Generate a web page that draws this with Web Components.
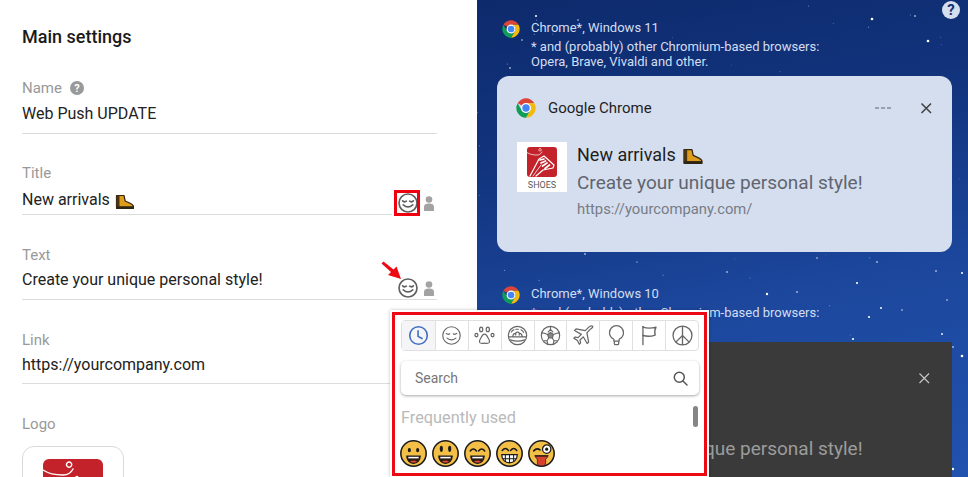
<!DOCTYPE html>
<html lang="en">
<head>
<meta charset="utf-8">
<title>Main settings</title>
<style>
  html, body { margin: 0; padding: 0; background: #fff; }
  body { font-family: Roboto, "Liberation Sans", sans-serif; overflow: hidden; }
</style>
</head>
<body>
<push-page>
  <settings-panel slot="left"></settings-panel>
  <preview-panel slot="right"></preview-panel>
  <emoji-popup slot="over"></emoji-popup>
</push-page>

<script>
const smileSvg = (size, color) => `<svg width="${size}" height="${size}" viewBox="0 0 24 24" fill="none" stroke="${color}" stroke-width="1.8" stroke-linecap="round"><circle cx="12" cy="12" r="9.8"/><path d="M6.200 9.600q2 1.900 4 .4M13.800 10q2 1.500 4-.4"/><path d="M6.800 14q5.200 4.600 10.400 0"/></svg>`

const tabIcons = [
  `<svg viewBox="0 0 24 24" fill="none" stroke="#3f6fc2" stroke-width="1.800" stroke-linecap="round" stroke-linejoin="round"><circle cx="12" cy="12" r="10"/><path d="M11.500 6.500V13l4.500 2.500"/></svg>`,
  `<svg viewBox="0 0 24 24" fill="none" stroke="#666" stroke-width="1.300" stroke-linecap="round"><circle cx="12" cy="12" r="10"/><path d="M6 9.600q2 1.900 4 .4M14 10q2 1.500 4-.4"/><path d="M7 15q5 4 10 0"/></svg>`,
  `<svg viewBox="0 0 24 24" fill="none" stroke="#666" stroke-width="1.400" stroke-linejoin="round"><ellipse cx="2.800" cy="11.500" rx="1.700" ry="2"/><ellipse cx="8.200" cy="5" rx="1.800" ry="2.600"/><ellipse cx="15.800" cy="5" rx="1.800" ry="2.600"/><ellipse cx="21.200" cy="11.500" rx="1.700" ry="2"/><path d="M12 10.500c-2 0-3 1.800-4 4-1 2-2.500 3.500-1.500 5.500 1 1.500 3.500.8 5.500.8s4.500.7 5.500-.8c1-2-.5-3.500-1.500-5.500-1-2.200-2-4-4-4z"/></svg>`,
  `<svg viewBox="0 0 24 24" fill="none" stroke="#666" stroke-width="1.300" stroke-linecap="round"><circle cx="12" cy="12" r="10.500"/><path d="M1.800 13.500h20.400M5 8q1-2 3-2.500M10 4.800h3M16 5.500q2 1 3 3M6.500 13.500q.5-4 3-4 2.500-2.500 5 0 2.500 0 3 4M10 9.500v2M14 9.500v2M4 17q8 3 16 0"/></svg>`,
  `<svg viewBox="0 0 24 24" fill="none" stroke="#666" stroke-width="1.300" stroke-linejoin="round"><circle cx="12" cy="12" r="10.500"/><path d="M12 8.500l3.300 2.400-1.300 3.900h-4l-1.300-3.900z" fill="#888"/><path d="M12 1.500V5l-3 3.500M12 5l3 3.500M15.300 10.900l3.700-1.500 3-.4M8.700 10.900L5 9.400l-3-.4M14 14.800l2 3.200-.8 3.500M10 14.800L8 18l.8 3.500M8 18H4.500M16 18h3.500"/></svg>`,
  `<svg viewBox="0 0 24 24" fill="none" stroke="#666" stroke-width="1.400" stroke-linejoin="round"><path d="M22.500 1.500c-1.500-.8-3.500 0-5 1.500l-3.500 3.500L3.500 4.500 1.800 6.200l7.700 4.500-3.700 3.700-3.300-.7L1 15l4 2.800 2.200 4.200 1.500-1.500-.7-3.300 3.700-3.700 4.500 7.700 1.700-1.700-2-10.500L19 5.500c1.500-1.500 4.200-2.500 3.500-4z"/></svg>`,
  `<svg viewBox="0 0 24 24" fill="none" stroke="#666" stroke-width="1.400" stroke-linecap="round" stroke-linejoin="round"><path d="M9 18.500v-2.300c-2.500-1.300-5-3.700-5-7.400a8 8 0 0 1 16 0c0 3.700-2.500 6.100-5 7.400v2.300z"/><path d="M9.500 19v2q0 1.500 1.500 1.500h2q1.500 0 1.500-1.500v-2"/></svg>`,
  `<svg viewBox="0 0 24 24" fill="none" stroke="#666" stroke-width="1.500" stroke-linecap="round" stroke-linejoin="round"><path d="M4.500 1.500v21"/><path d="M4.500 2.500q7 2.200 15 0-2.500 4.500-1 9-7 2.500-14 .5"/></svg>`,
  `<svg viewBox="0 0 24 24" fill="none" stroke="#666" stroke-width="1.500"><circle cx="12" cy="12" r="10.800"/><path d="M12 1.200v21.600M12 12l-7.600 7.600M12 12l7.600 7.600"/></svg>`
]

const chromeSvg = size => `<svg width="${size}" height="${size}" viewBox="1.500 1.500 21 21" style="display:block"><path fill="#db4437" d="M3.200 6.900A10.200 10.200 0 0 1 20.800 6.900H12A5 5 0 0 0 7.700 9.500z"/><path fill="#f2b90f" d="M20.800 6.900A10.200 10.200 0 0 1 12 22.200L16.300 14.500A5 5 0 0 0 16.300 9.500 5 5 0 0 0 12 6.900z"/><path fill="#0f9d58" d="M12 22.200A10.200 10.200 0 0 1 3.200 6.900L7.700 14.500A5 5 0 0 0 12 17 5 5 0 0 0 16.300 14.500z"/><circle cx="12" cy="12" r="5.200" fill="#fff"/><circle cx="12" cy="12" r="3.900" fill="#4285f4"/></svg>`

const bootSvg = `<svg width="100%" height="100%" viewBox="0 0 20 16" style="display:block"><path d="M1.500 1.500h7.500l1.200 5.500 5 2.300c2 .9 3.300 1.800 3.300 3.700H1.500z" fill="#dd9c1c" stroke="#33260f" stroke-width="1.200" stroke-linejoin="round"/><path d="M1.500 1.500h3v11.500h-3z" fill="#4a3512"/><rect x="1" y="12.500" width="18" height="2.600" rx=".6" fill="#2d2413"/></svg>`

const shoeLogoSvg = `<svg width="100%" height="100%" viewBox="0 0 30 30" style="display:block"><rect width="30" height="30" rx="3" fill="#c4222a"/><g fill="none" stroke="#fff" stroke-linecap="round" stroke-linejoin="round"><path stroke-width=".7" d="M0 5.500c3 2 6 2.500 10 2.500 2 0 4-1 5-3M13 1.500a1.300 1.300 0 1 0 .1 0"/><path stroke-width="1.200" d="M3 29L12 12l5-3 10 9-1 3-10 2-7 6"/><path stroke-width="1.700" d="M13 13l4-1M14 16l4.500-2M15.500 19l4.500-3M18 21.500l4.500-3.500"/><path stroke-width=".8" d="M6 29l8-11"/></g></svg>`

class PushPage extends HTMLElement {
  constructor() {
    super()
    this.attachShadow({ mode: 'open' }).innerHTML = `
      <style>
        :host { display: flex; position: relative; width: 968px; height: 477px; overflow: hidden; }
        ::slotted([slot=left]) { width: 477px; flex: none; }
        ::slotted([slot=right]) { flex: 1; min-width: 0; }
        ::slotted([slot=over]) { position: absolute; left: 390px; top: 310px; }
      </style>
      <slot name="left"></slot>
      <slot name="right"></slot>
      <slot name="over"></slot>`
  }
}

class SettingField extends HTMLElement {
  constructor() {
    super()
    this.attachShadow({ mode: 'open' }).innerHTML = `
      <style>
        :host { display: block; color: #222; }
        .label { display: flex; align-items: center; gap: 8px; height: 20px; font-size: 15px; color: #999; }
        .row { display: flex; justify-content: space-between; align-items: flex-end; margin-top: var(--value-gap, 6px); min-height: var(--row-h, 29px); }
        .value { align-self: flex-start; display: flex; align-items: center; gap: 5px; height: 20px; font-size: 16px; line-height: 20px; }
        .line { height: 1px; background: #dcdcdc; margin-right: var(--line-cut, 0); }
      </style>
      <div class="label"><slot name="label"></slot></div>
      <div class="row">
        <div class="value"><slot></slot></div>
        <slot name="tools"></slot>
      </div>
      <div class="line"></div>`
  }
}

class HelpDot extends HTMLElement {
  constructor() {
    super()
    this.attachShadow({ mode: 'open' }).innerHTML = `
      <style>
        :host { display: inline-flex; align-items: center; justify-content: center; width: var(--size, 14px); height: var(--size, 14px); border-radius: 50%;
          background: var(--bg, #999); color: var(--fg, #fff); font: 700 var(--fs, 11px)/1 Roboto, "Liberation Sans", sans-serif; }
      </style>?`
  }
}

class FieldTools extends HTMLElement {
  constructor() {
    super()
    this.attachShadow({ mode: 'open' })
  }
  connectedCallback() {
    const boxed = this.hasAttribute('boxed')
    const arrow = this.hasAttribute('arrow')
    this.shadowRoot.innerHTML = `
      <style>
        :host { display: flex; align-items: center; height: 22px; }
        .smile { position: relative; width: 22px; height: 22px; margin-right: 2px; display: flex; align-items: center; justify-content: center; }
        .smile svg { display: block; }
        .box { position: absolute; left: -3px; top: -2px; width: 20px; height: 20px; border: 3px solid #f0000f; }
        .arrow { position: absolute; left: -16px; top: -16px; }
        .person { width: 16px; display: flex; justify-content: center; }
      </style>
      <div class="smile">
        ${smileSvg(22, '#5f5f5f')}
        ${boxed ? '<div class="box"></div>' : ''}
        ${arrow ? '<svg class="arrow" width="22" height="22" viewBox="0 0 22 22"><path d="M.5 2.500l2-2 10 8 3-3L20 18 7 14l3-3z" fill="#ee0a12"/></svg>' : ''}
      </div>
      <div class="person"><svg width="10" height="15" viewBox="0 0 10 15"><circle cx="5" cy="3.500" r="3.300" fill="#a3a3a3"/><path d="M0 15v-3.500C0 8.500 2 7.600 5 7.600s5 .9 5 3.900V15z" fill="#a3a3a3"/></svg></div>`
  }
}

class BootEmoji extends HTMLElement {
  constructor() {
    super()
    this.attachShadow({ mode: 'open' }).innerHTML = `<style>:host { display: inline-block; width: var(--boot-w, 20px); height: var(--boot-h, 16px); position: relative; top: 2px; }</style>${bootSvg}`
  }
}

class ShoeLogo extends HTMLElement {
  constructor() {
    super()
    this.attachShadow({ mode: 'open' }).innerHTML = `<style>:host { display: block; width: var(--size, 30px); height: var(--size, 30px); }</style>${shoeLogoSvg}`
  }
}

class SettingsPanel extends HTMLElement {
  constructor() {
    super()
    this.attachShadow({ mode: 'open' }).innerHTML = `
      <style>
        :host { display: block; box-sizing: border-box; height: 477px; padding: 0 40px 0 22px; background: #fff; overflow: hidden; }
        h2 { margin: 0; padding-top: 25px; height: 23px; font-size: 18px; font-weight: 500; line-height: 23px; color: #1a1a1a; }
        setting-field { margin-top: 30px; }
        .logo-label { margin-top: 30px; height: 20px; line-height: 20px; font-size: 15px; color: #999; }
        .logo-box { box-sizing: border-box; width: 102px; height: 102px; margin-top: 12px; padding: 12px 20px; border: 1px solid #d9d9d9; border-radius: 12px; }
      </style>
      <h2>Main settings</h2>
      <setting-field>
        <span slot="label">Name</span><help-dot slot="label"></help-dot>
        Web Push UPDATE
      </setting-field>
      <setting-field style="--row-h:24px;--value-gap:7px;--line-cut:45px;margin-top:29px">
        <span slot="label">Title</span>
        New arrivals <boot-emoji></boot-emoji>
        <field-tools slot="tools" boxed></field-tools>
      </setting-field>
      <setting-field style="--value-gap:5px">
        <span slot="label">Text</span>
        Create your unique personal style!
        <field-tools slot="tools" arrow></field-tools>
      </setting-field>
      <setting-field style="--value-gap:5px;--row-h:28px">
        <span slot="label">Link</span>
        https://yourcompany.com
      </setting-field>
      <div class="logo-label">Logo</div>
      <div class="logo-box"><shoe-logo style="--size:60px"></shoe-logo></div>`
  }
}

class BrowserHead extends HTMLElement {
  constructor() {
    super()
    this.attachShadow({ mode: 'open' }).innerHTML = `
      <style>
        :host { display: flex; gap: 11px; padding-left: 5px; color: #d3def2; font-size: 13px; line-height: 15px; }
        .icon { flex: none; }
        .title { margin-bottom: 4px; }
      </style>
      <div class="icon">${chromeSvg(18)}</div>
      <div>
        <div class="title"><slot name="title"></slot></div>
        <div>* and (probably) other Chromium-based browsers:</div>
        <div>Opera, Brave, Vivaldi and other.</div>
      </div>`
  }
}

class NotifyCard extends HTMLElement {
  constructor() {
    super()
    this.attachShadow({ mode: 'open' })
  }
  connectedCallback() {
    const url = this.getAttribute('url')
    const dark = this.hasAttribute('dark')
    this.shadowRoot.innerHTML = `
      <style>
        :host { display: block; box-sizing: border-box; padding: 21px 19px 0 19px; height: var(--h, 176px); border-radius: 12px; background: #d5deee; color: #1e1e1e; }
        :host([dark]) { border-radius: 0; background: #3a3a3a; color: #ddd; --soft: #9c9c9c; }
        .top { display: flex; align-items: center; height: 22px; gap: 12px; }
        .app { flex: 1; font-size: 15px; }
        .dots { display: flex; gap: 2px; margin-right: 16px; }
        .dots i { width: 4px; height: 1.500px; background: #9aa0ab; }
        :host([dark]) .dots { visibility: hidden; }
        .close { display: block; }
        :host([dark]) .close { margin: 8px 2px 0 0; }
        .body { display: flex; gap: 10px; margin-top: 23px; margin-left: 1px; }
        .pic { box-sizing: border-box; width: 50px; height: 50px; flex: none; background: #fff; padding-top: 5px; display: flex; flex-direction: column; align-items: center; }
        .pic span { font-size: 9px; line-height: 11px; color: #5a5a5a; margin-top: 3px; }
        .t { display: flex; align-items: center; gap: 6px; height: 24px; font-size: 18px; --boot-w: 22px; --boot-h: 17px; }
        .m { height: 24px; line-height: 24px; margin-top: 5px; font-size: 19px; color: var(--soft, #5f6570); white-space: nowrap; }
        .u { height: 20px; line-height: 20px; margin-top: 4px; font-size: 14.800px; color: #777c86; }
      </style>
      <div class="top">
        ${chromeSvg(20)}
        <div class="app">Google Chrome</div>
        <div class="dots"><i></i><i></i><i></i></div>
        <svg class="close" width="14" height="14" viewBox="0 0 14 14" stroke="${dark ? '#c8c8c8' : '#444'}" stroke-width="${dark ? 1.1 : 1.6}" fill="none"><path d="M2.500 2.500l9.500 9.500M12 2.500L2.500 12"/></svg>
      </div>
      <div class="body">
        <div class="pic"><shoe-logo></shoe-logo><span>SHOES</span></div>
        <div>
          <div class="t">New arrivals <boot-emoji></boot-emoji></div>
          <div class="m">Create your unique personal style!</div>
          ${url ? `<div class="u">${url}</div>` : ''}
        </div>
      </div>`
  }
}

class StarField extends HTMLElement {
  constructor() {
    super()
    // stars seen in the picture first, the faint rest from a small fixed generator
    const bright = [[395,19,1.3],[451,41,1.3],[438,16,.8],[59,16,1],[45,40,.7],[33,68,.8],[101,20,.7],[380,283,1.1],[290,294,1.2],[392,317,1.1],[404,308,1],[376,339,1.1],[465,334,.9],[485,273,1],[459,271,.8],[485,356,1.3],[476,347,.8],[476,469,1.2],[320,292,.8],[250,272,.8],[108,254,.8],[160,262,.6],[400,262,.8],[340,258,.7],[470,300,.7],[425,310,.7]]
    let seed = 17
    const rnd = () => (seed = (seed * 16807) % 2147483647) / 2147483647
    let dots = bright.map(([x, y, r]) => `<circle cx="${x}" cy="${y}" r="${r}" fill="#fff"/>`).join('')
    for (let i = 0; i < 60; i++) {
      dots += `<circle cx="${(rnd() * 491).toFixed(1)}" cy="${(rnd() * 477).toFixed(1)}" r=".6" fill="#a9bce6" opacity="${(.25 + rnd() * .5).toFixed(2)}"/>`
    }
    this.attachShadow({ mode: 'open' }).innerHTML = `
      <style>:host { display: block; position: absolute; inset: 0; pointer-events: none; }</style>
      <svg width="491" height="477" style="display:block">${dots}</svg>`
  }
}

class PreviewPanel extends HTMLElement {
  constructor() {
    super()
    this.attachShadow({ mode: 'open' }).innerHTML = `
      <style>
        :host { display: block; position: relative; box-sizing: border-box; height: 477px; padding: 19.500px 16px 0 20px; overflow: hidden;
          background: linear-gradient(170deg, #0d2a6c 0%, #12347e 30%, #1c479d 62%, #2152ae 100%); }
        .wrap { position: relative; }
        .head { margin-bottom: 7.500px; }
        .second { margin-top: 33.500px; }
        help-dot { position: absolute; right: 8px; top: 1px; --size: 18px; --bg: #d5deee; --fg: #14306f; --fs: 15px; }
      </style>
      <star-field></star-field>
      <div class="wrap">
        <browser-head class="head"><span slot="title">Chrome*, Windows 11</span></browser-head>
        <notify-card url="https://yourcompany.com/"></notify-card>
        <browser-head class="head second"><span slot="title">Chrome*, Windows 10</span></browser-head>
        <notify-card dark style="--h:140px"></notify-card>
      </div>
      <help-dot></help-dot>`
  }
}

class EmojiFace extends HTMLElement {
  constructor() {
    super()
    this.attachShadow({ mode: 'open' })
  }
  connectedCallback() {
    const kind = this.getAttribute('kind')
    const open = '<path d="M6.500 15.500h13c0 4.500-3 7-6.500 7s-6.500-2.500-6.500-7z" fill="#2a1c12" stroke="#1a1a1a" stroke-width="1"/><path d="M8 16.200h10v1.500H8z" fill="#fff"/><path d="M9.500 20.800q3.500-2 7 0-3.500 2.300-7 0z" fill="#d9412f"/>'
    const parts = {
      grin: `<ellipse cx="9" cy="9.700" rx="1.500" ry="2.100" fill="#1a1a1a"/><ellipse cx="17" cy="9.700" rx="1.500" ry="2.100" fill="#1a1a1a"/>${open}`,
      tall: `<ellipse cx="9" cy="8.500" rx="1.500" ry="3" fill="#1a1a1a"/><ellipse cx="17" cy="8.500" rx="1.500" ry="3" fill="#1a1a1a"/>${open}`,
      smile: `<path d="M6 10.500q3-3.500 6 0M14 10.500q3-3.500 6 0" fill="none" stroke="#1a1a1a" stroke-width="1.500" stroke-linecap="round"/>${open}`,
      teeth: `<path d="M6 10q3-3.500 6 0M14 10q3-3.500 6 0" fill="none" stroke="#1a1a1a" stroke-width="1.500" stroke-linecap="round"/><path d="M5.500 14h15c0 5-3.500 8-7.500 8s-7.500-3-7.500-8z" fill="#fff" stroke="#1a1a1a" stroke-width="1.200"/><path d="M9 14.500v6.500M13 14.500v7.500M17 14.500v6.500M6.500 18h13" stroke="#1a1a1a" stroke-width="1" fill="none"/>`,
      wink: `<path d="M5.500 10.500q3-3.500 6-1" fill="none" stroke="#1a1a1a" stroke-width="1.600" stroke-linecap="round"/><circle cx="18" cy="8.800" r="4" fill="#fff" stroke="#1a1a1a" stroke-width="1.200"/><circle cx="18" cy="8.800" r="1.500" fill="#1a1a1a"/><path d="M6.500 15h13q-1 2.500-2.500 3.500v3.500q0 3-4 3t-4-3v-3.500q-1.500-1-2.500-3.500z" fill="#d9412f" stroke="#1a1a1a" stroke-width=".7"/><path d="M7 15h12v1H7z" fill="#1a1a1a"/>`
    }
    this.shadowRoot.innerHTML = `
      <style>:host { display: block; width: 27px; height: 27px; } svg { display: block; }</style>
      <svg width="27" height="27" viewBox="0 0 26 26"><circle cx="13" cy="13" r="12.200" fill="#f4bf47" stroke="#1a1a1a" stroke-width="1.500"/>${parts[kind]}</svg>`
  }
}

class EmojiPopup extends HTMLElement {
  constructor() {
    super()
    const cells = tabIcons.map((svg, i) => `<div class="cell${i === 0 ? ' on' : ''}">${svg}</div>`).join('')
    this.attachShadow({ mode: 'open' }).innerHTML = `
      <style>
        :host { display: block; box-sizing: border-box; width: 319px; height: 167px; padding: 2px 2px 1.500px; background: #fff; box-shadow: 0 0 3px rgba(0,0,0,.25); }
        .frame { box-sizing: border-box; height: 100%; border: 3px solid #ec0a14; padding: 5px 5px 0 6px; overflow: hidden; }
        .tabs { display: grid; grid-template-columns: repeat(9, 1fr); box-sizing: border-box; width: 298px; height: 31px; border: 1px solid #e0e0e0; border-radius: 4px; }
        .cell { display: flex; align-items: center; justify-content: center; border-left: 1px solid #e0e0e0; }
        .cell:first-child { border-left: 0; }
        .cell.on { background: #f5f5f7; }
        .cell svg { width: 21px; height: 21px; display: block; }
        .search { display: flex; align-items: center; justify-content: space-between; box-sizing: border-box; width: 298px; height: 34px; margin-top: 10px; padding: 0 11px 0 14px; border-radius: 5px; box-shadow: 0 1px 3px rgba(0,0,0,.35); font-size: 14px; color: #777; }
        .used { position: relative; display: flex; align-items: center; height: 22px; margin-top: 11px; font-size: 16.300px; color: #b9b9b9; }
        .bar { position: absolute; left: 292px; top: 0; width: 5px; height: 21px; border-radius: 3px; background: #858585; }
        .row { display: flex; gap: 5px; margin-top: 12px; margin-left: -1.500px; }
      </style>
      <div class="frame">
        <div class="tabs">${cells}</div>
        <div class="search">
          <span>Search</span>
          <svg width="15" height="15" viewBox="0 0 15 15" fill="none" stroke="#555" stroke-width="1.500" stroke-linecap="round"><circle cx="6.300" cy="6.300" r="5"/><path d="M10 10l4 4"/></svg>
        </div>
        <div class="used">Frequently used<div class="bar"></div></div>
        <div class="row">
          <emoji-face kind="grin"></emoji-face>
          <emoji-face kind="tall"></emoji-face>
          <emoji-face kind="smile"></emoji-face>
          <emoji-face kind="teeth"></emoji-face>
          <emoji-face kind="wink"></emoji-face>
        </div>
      </div>`
  }
}

customElements.define('help-dot', HelpDot)
customElements.define('boot-emoji', BootEmoji)
customElements.define('shoe-logo', ShoeLogo)
customElements.define('field-tools', FieldTools)
customElements.define('setting-field', SettingField)
customElements.define('settings-panel', SettingsPanel)
customElements.define('browser-head', BrowserHead)
customElements.define('notify-card', NotifyCard)
customElements.define('star-field', StarField)
customElements.define('preview-panel', PreviewPanel)
customElements.define('emoji-face', EmojiFace)
customElements.define('emoji-popup', EmojiPopup)
customElements.define('push-page', PushPage)
</script>
</body>
</html>
